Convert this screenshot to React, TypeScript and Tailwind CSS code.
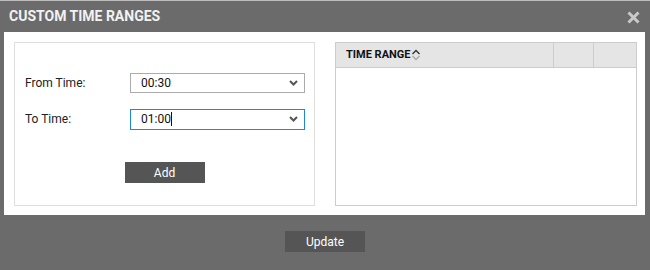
import React from "react";

const Chevron = () => (
  <svg width="9" height="6" viewBox="0 0 9 6" className="shrink-0">
    <path d="M1 1 L4.5 4.5 L8 1" fill="none" stroke="#555" strokeWidth="2" />
  </svg>
);

const SortIcon = () => (
  <svg width="10" height="12" viewBox="0 0 10 12" className="ml-[1px]">
    <path d="M1.5 5 L5 1.5 L8.5 5" fill="none" stroke="#333" strokeWidth="1.4" />
    <path d="M1.5 7 L5 10.5 L8.5 7" fill="none" stroke="#aaa" strokeWidth="1.4" />
  </svg>
);

export default function App() {
  return (
    <div
      className="w-[650px] h-[270px] bg-[#6b6b6b] border-t border-[#bdbdbd] flex flex-col"
      style={{ fontFamily: "Roboto, 'Liberation Sans', Arial, sans-serif" }}
    >
      <div className="h-[31px] flex items-center justify-between pl-[9px] pr-[10px] shrink-0">
        <span className="text-[14px] font-bold text-[#f2f2f2]">CUSTOM TIME RANGES</span>
        <svg width="13" height="13" viewBox="0 0 13 13" className="mt-[2px]">
          <path d="M1.5 1.5 L11.5 11.5 M11.5 1.5 L1.5 11.5" stroke="#c9c9c9" strokeWidth="3" />
        </svg>
      </div>
      <div className="ml-[4px] mr-[5px] h-[183px] bg-white pl-[10px] pr-[8px] pt-[10px] pb-[9px] flex gap-[20px] shrink-0">
        <div className="w-[301px] border border-[#dedede] pl-[10px] pt-[30px] flex flex-col">
          <div className="flex items-center h-[20px]">
            <span className="w-[105px] text-[12px] text-[#222]">From Time:</span>
            <div className="w-[175px] h-[20px] border border-[#ababab] flex items-center justify-between pl-[10px] pr-[6px]">
              <span className="text-[12px] text-[#111]">00:30</span>
              <Chevron />
            </div>
          </div>
          <div className="flex items-center h-[20px] mt-[16px]">
            <span className="w-[105px] text-[12px] text-[#222]">To Time:</span>
            <div className="w-[175px] h-[21px] border border-[#1e8ccc] flex items-center justify-between pl-[10px] pr-[6px]">
              <span className="text-[12px] text-[#111] flex items-center">
                01:00<span className="inline-block w-[1px] h-[14px] bg-[#111]" />
              </span>
              <Chevron />
            </div>
          </div>
          <div className="flex justify-center mt-[33px] pr-[10px]">
            <div className="w-[80px] h-[21px] bg-[#555555] flex items-center justify-center text-[12px] text-white">Add</div>
          </div>
        </div>
        <div className="w-[302px] border border-[#cccccc] flex flex-col">
          <div className="h-[25px] bg-[#e5e5e5] border-b border-[#cccccc] flex">
            <div className="w-[218px] border-r border-[#cccccc] flex items-center pl-[10px]">
              <span className="text-[11px] font-bold text-[#111]">TIME RANGE</span>
              <SortIcon />
            </div>
            <div className="w-[40px] border-r border-[#cccccc]" />
            <div className="flex-1" />
          </div>
        </div>
      </div>
      <div className="flex justify-center pt-[16px]">
        <div className="w-[80px] h-[21px] bg-[#555555] flex items-center justify-center text-[12px] text-white">Update</div>
      </div>
    </div>
  );
}
